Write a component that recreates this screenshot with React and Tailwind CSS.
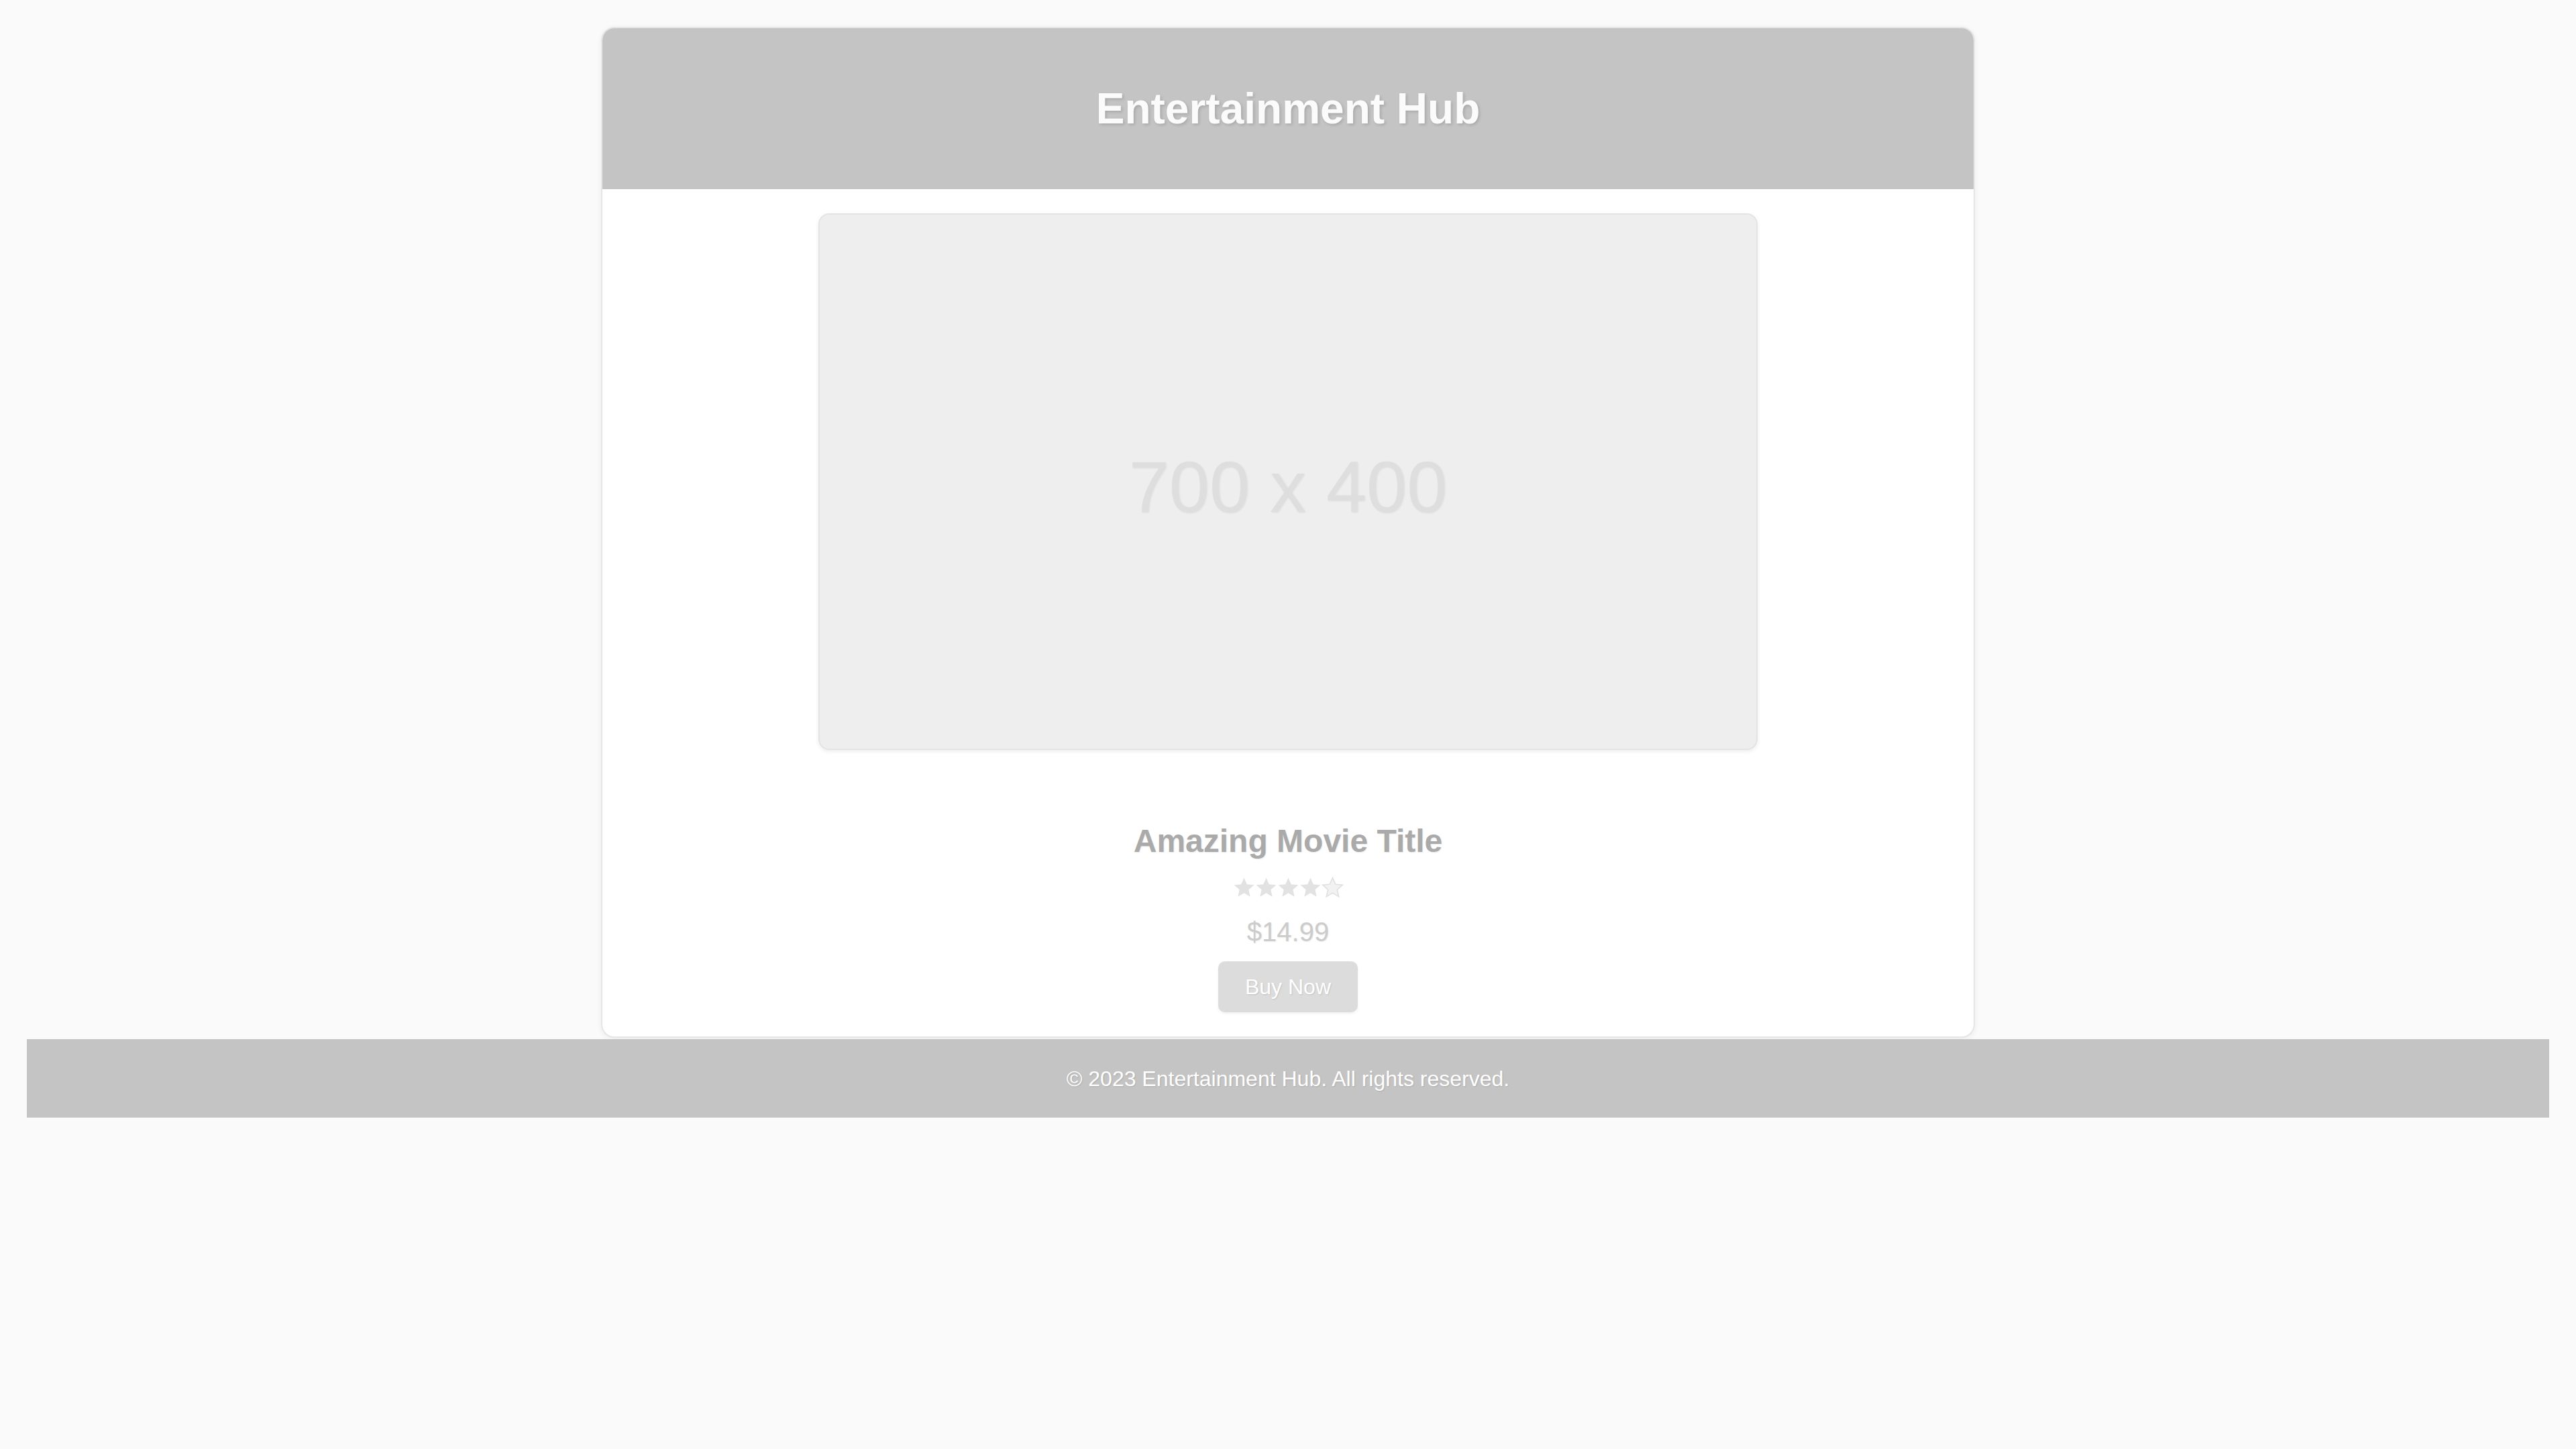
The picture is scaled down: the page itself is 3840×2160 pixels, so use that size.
import React from "react";

const Star = ({ filled }) => (
  <svg viewBox="0 0 24 24" className="w-[33px] h-[33px]">
    <path
      d="M12 1.8l3.1 7.1 7.7.7-5.8 5.1 1.7 7.6L12 18.3l-6.7 4 1.7-7.6-5.8-5.1 7.7-.7z"
      fill={filled ? "#e2e2e2" : "#f2f2f2"}
      stroke={filled ? "none" : "#e0e0e0"}
      strokeWidth="1.2"
    />
  </svg>
);

const App = () => {
  return (
    <div className="min-h-[2160px] bg-[#fafafa] px-[40px] pt-[40px] font-['Liberation_Sans',Arial,sans-serif]">
      {/* CARD */}
      <div className="mx-auto w-[2048px] bg-white rounded-[20px] border-2 border-[#e6e6e6] shadow-[0_2px_8px_rgba(0,0,0,0.06)] overflow-hidden">
        {/* Header */}
        <div className="h-[240px] bg-[#c4c4c4] flex items-center justify-center">
          <h1 className="text-[64px] font-bold text-[#fbfbfb] leading-none [text-shadow:2px_2px_4px_rgba(0,0,0,0.15)]">
            Entertainment Hub
          </h1>
        </div>

        {/* Content */}
        <div className="flex flex-col items-center pt-[36px] pb-[36px]">
          <div className="w-[1400px] h-[800px] bg-[#eeeeee] rounded-[16px] border-2 border-[#e4e4e4] shadow-[0_2px_6px_rgba(0,0,0,0.08)] flex items-center justify-center">
            <span className="text-[108px] text-[#dedede] leading-none pt-[16px] [text-shadow:1px_1px_3px_rgba(0,0,0,0.08)]">
              700 x 400
            </span>
          </div>

          <h2 className="mt-[108px] text-[48px] leading-[56px] font-bold text-[#aaaaaa] [text-shadow:1px_1px_2px_rgba(0,0,0,0.08)]">
            Amazing Movie Title
          </h2>

          <div className="mt-[24px] flex items-center">
            <Star filled />
            <Star filled />
            <Star filled />
            <Star filled />
            <Star />
          </div>

          <p className="mt-[27px] text-[40px] leading-[46px] text-[#cccccc] [text-shadow:1px_1px_2px_rgba(0,0,0,0.08)]">
            $14.99
          </p>

          <button className="mt-[21px] w-[208px] h-[76px] rounded-[10px] bg-[#dcdcdc] text-white text-[32px] shadow-[0_2px_4px_rgba(0,0,0,0.06)] [text-shadow:1px_1px_2px_rgba(0,0,0,0.12)]">
            Buy Now
          </button>
        </div>
      </div>

      {/* FOOTER */}
      <div className="mt-[2px] h-[117px] bg-[#c4c4c4] flex items-center justify-center">
        <p className="text-[32px] text-white [text-shadow:1px_1px_2px_rgba(0,0,0,0.12)]">
          © 2023 Entertainment Hub. All rights reserved.
        </p>
      </div>
    </div>
  );
};

export default App;
